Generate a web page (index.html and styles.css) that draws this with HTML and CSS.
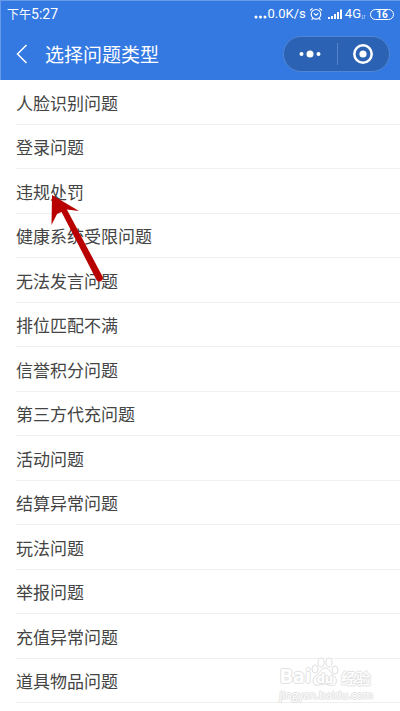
FILE: index.html
```html
<!DOCTYPE html>
<html lang="zh-CN">
<head>
  <meta charset="UTF-8">
  <meta name="viewport" content="width=device-width, initial-scale=1.0">
  <title>选择问题类型</title>
  <link rel="stylesheet" href="styles.css">
</head>
<body>
  <header class="cabecera">
    <div class="estado">
      <div class="hora">下午<span class="cifras">5:27</span></div>
      <div class="indicadores">
        <svg class="puntos" width="13" height="14" viewBox="0 0 13 14" fill="#fff">
          <circle cx="2" cy="10" r="1.5"/><circle cx="6.500" cy="10" r="1.5"/><circle cx="11" cy="10" r="1.5"/>
        </svg>
        <span class="velocidad">0.0K/s</span>
        <svg class="alarma" width="14" height="14" viewBox="0 0 14 14" fill="none" stroke="#fff" stroke-width="1.1">
          <circle cx="7" cy="7.300" r="4.800"/>
          <path d="M1 3.500 3.600 1.300M13 3.500 10.400 1.300M3.800 11.300 2.600 12.800M10.200 11.300 11.400 12.800M4.900 6.300 7 8.200 9.300 6.300"/>
        </svg>
        <svg class="senal" width="15" height="14" viewBox="0 0 15 14" fill="#fff">
          <path d="M0 10h2v2H0zM3 9h2v3H3zM6 7h2v5H6zM9 5h2v7H9zM12 2.500h2V12h-2z"/>
        </svg>
        <span class="red">4G</span>
        <svg class="datos" width="5" height="14" viewBox="0 0 5 14" fill="none" stroke="#a7c5f3" stroke-width="0.700">
          <path d="M1.500 8v4M0.500 11l1 1 1-1M3.500 12V8M2.600 9l0.900-1 1 1"/>
        </svg>
        <span class="bateria">16</span>
      </div>
    </div>
    <div class="barra">
      <button class="volver" type="button" aria-label="返回">
        <svg width="12" height="20" viewBox="0 0 12 20" fill="none" stroke="#fff" stroke-width="1.5">
          <path d="M10.500 1 1.500 10l9 9"/>
        </svg>
      </button>
      <h1>选择问题类型</h1>
      <div class="capsula">
        <button type="button" aria-label="更多">
          <svg width="22" height="22" viewBox="0 0 22 22" fill="#fff">
            <circle cx="2.500" cy="11" r="2"/><circle cx="11" cy="11" r="3.500"/><circle cx="19.500" cy="11" r="2"/>
          </svg>
        </button>
        <button type="button" aria-label="关闭">
          <svg width="22" height="22" viewBox="0 0 22 22">
            <circle cx="11" cy="11" r="8.700" fill="none" stroke="#fff" stroke-width="2.500"/>
            <circle cx="11" cy="11" r="3.600" fill="#fff"/>
          </svg>
        </button>
      </div>
    </div>
  </header>

  <ul class="lista">
    <li><a href="#">人脸识别问题</a></li>
    <li><a href="#">登录问题</a></li>
    <li class="marcado">
      <a href="#">违规处罚</a>
      <svg class="flecha" width="56" height="94" viewBox="0 0 56 94" fill="#b90000">
        <path d="M12 15 17 12 54.500 82.500A3.500 3.500 0 0 1 48.500 86z"/>
        <path d="M4 1 31 17 19 15.500 9 20 3.500 31z"/>
      </svg>
    </li>
    <li><a href="#">健康系统受限问题</a></li>
    <li><a href="#">无法发言问题</a></li>
    <li><a href="#">排位匹配不满</a></li>
    <li><a href="#">信誉积分问题</a></li>
    <li><a href="#">第三方代充问题</a></li>
    <li><a href="#">活动问题</a></li>
    <li><a href="#">结算异常问题</a></li>
    <li><a href="#">玩法问题</a></li>
    <li><a href="#">举报问题</a></li>
    <li><a href="#">充值异常问题</a></li>
    <li><a href="#">道具物品问题</a></li>
  </ul>

  <div class="marca">
    <div class="logo">
      <span class="bai">Bai</span>
      <span class="huella">
        <svg width="28" height="30" viewBox="0 0 28 30" fill="#fff" stroke="#dedede">
          <ellipse cx="4" cy="12" rx="3" ry="4"/>
          <ellipse cx="10" cy="5.500" rx="3" ry="4.500"/>
          <ellipse cx="18" cy="5.500" rx="3" ry="4.500"/>
          <ellipse cx="24" cy="13" rx="3" ry="4"/>
          <path d="M14 11c4 0 5 4 8 7 3 2 4 5 3 8-1 3-4 3-7 2-3-1-6-1-9 0-4 1-7 0-7-4 0-3 2-5 5-7 2-2 4-6 7-6z"/>
        </svg>
        <span class="du">du</span>
      </span>
      <span class="jingyan">经验</span>
    </div>
    <div class="direccion">jingyan.baidu.com</div>
  </div>
</body>
</html>
```
FILE: styles.css
```css
* {
  box-sizing: border-box;
}

body {
  position: relative;
  display: flex;
  flex-direction: column;
  min-height: 100vh;
  margin: 0;
  padding-bottom: 8px;
  background: #fff;
  color: #444;
  font-family: "Noto Sans CJK SC", sans-serif;
}

button {
  padding: 0;
  border: 0;
  background: none;
  cursor: pointer;
}

svg {
  display: block;
  flex: none;
}

.cabecera {
  height: 80px;
  border-top: 1px solid #669aea;
  border-left: 1px solid #669aea;
  background: #3479e1;
  color: #fff;
}

.estado {
  display: flex;
  justify-content: space-between;
  align-items: center;
  height: 26px;
  padding: 0 6px;
  font-size: 12px;
  line-height: 26px;
}

.cifras {
  font-family: Roboto, sans-serif;
  font-size: 14px;
}

.indicadores {
  display: flex;
  align-items: center;
}

.velocidad,
.red {
  font-family: Roboto, sans-serif;
  font-size: 13px;
}

.puntos {
  margin-right: 1px;
}

.alarma {
  margin: 0 5px 0 3px;
}

.red {
  margin-left: 2px;
}

.datos {
  margin-right: 4px;
}

.bateria {
  width: 24px;
  height: 11px;
  border: 1px solid #fff;
  border-radius: 6px;
  font-family: Roboto, sans-serif;
  font-size: 10px;
  font-weight: 700;
  line-height: 9px;
  text-align: center;
}

.barra {
  display: flex;
  align-items: center;
  height: 53px;
  padding: 0 10px 0 15px;
}

.volver {
  width: 12px;
  height: 20px;
  margin-right: 17px;
}

h1 {
  margin: 0;
  font-size: 19px;
  font-weight: 400;
  line-height: 28px;
}

.capsula {
  display: flex;
  width: 107px;
  height: 36px;
  margin-left: auto;
  border: 1px solid #5086d3;
  border-radius: 18px;
  background: #2b62b3;
}

.capsula button {
  display: flex;
  flex: 1;
  align-items: center;
  justify-content: center;
}

.capsula button + button {
  position: relative;
}

.capsula button + button::before {
  content: "";
  position: absolute;
  top: 6px;
  bottom: 6px;
  left: 0;
  width: 1px;
  background: #5685c9;
}

.lista {
  display: flex;
  flex: 1;
  flex-direction: column;
  margin: 0;
  padding: 0 0 0 16px;
  list-style: none;
}

.lista li {
  display: flex;
  flex: 1;
  min-height: 44px;
  border-bottom: 1px solid #efefef;
}

.lista a {
  display: flex;
  flex: 1;
  align-items: center;
  padding-top: 2px;
  color: #444;
  font-size: 17px;
  line-height: 24px;
  text-decoration: none;
}

.marcado {
  position: relative;
}

.flecha {
  position: absolute;
  top: 25px;
  left: 32px;
  z-index: 1;
  pointer-events: none;
}

/* marca de agua */
.marca {
  position: absolute;
  right: 27px;
  bottom: 9px;
  color: #fff;
  font-family: "Open Sans", "Noto Sans CJK SC", sans-serif;
  text-shadow: 1px 0 #e2e2e2, -1px 0 #e2e2e2, 0 1px #e2e2e2, 0 -1px #e2e2e2;
  pointer-events: none;
}

.logo {
  display: flex;
  align-items: flex-end;
  height: 30px;
}

.bai {
  font-size: 20px;
  font-weight: 700;
  line-height: 22px;
}

.huella {
  position: relative;
}

.du {
  position: absolute;
  right: 0;
  bottom: 2px;
  left: 0;
  font-size: 13px;
  font-weight: 700;
  line-height: 14px;
  text-align: center;
}

.jingyan {
  margin-left: 2px;
  font-size: 15px;
  font-weight: 500;
  line-height: 18px;
}

.direccion {
  font-size: 11px;
  line-height: 15px;
}
```
